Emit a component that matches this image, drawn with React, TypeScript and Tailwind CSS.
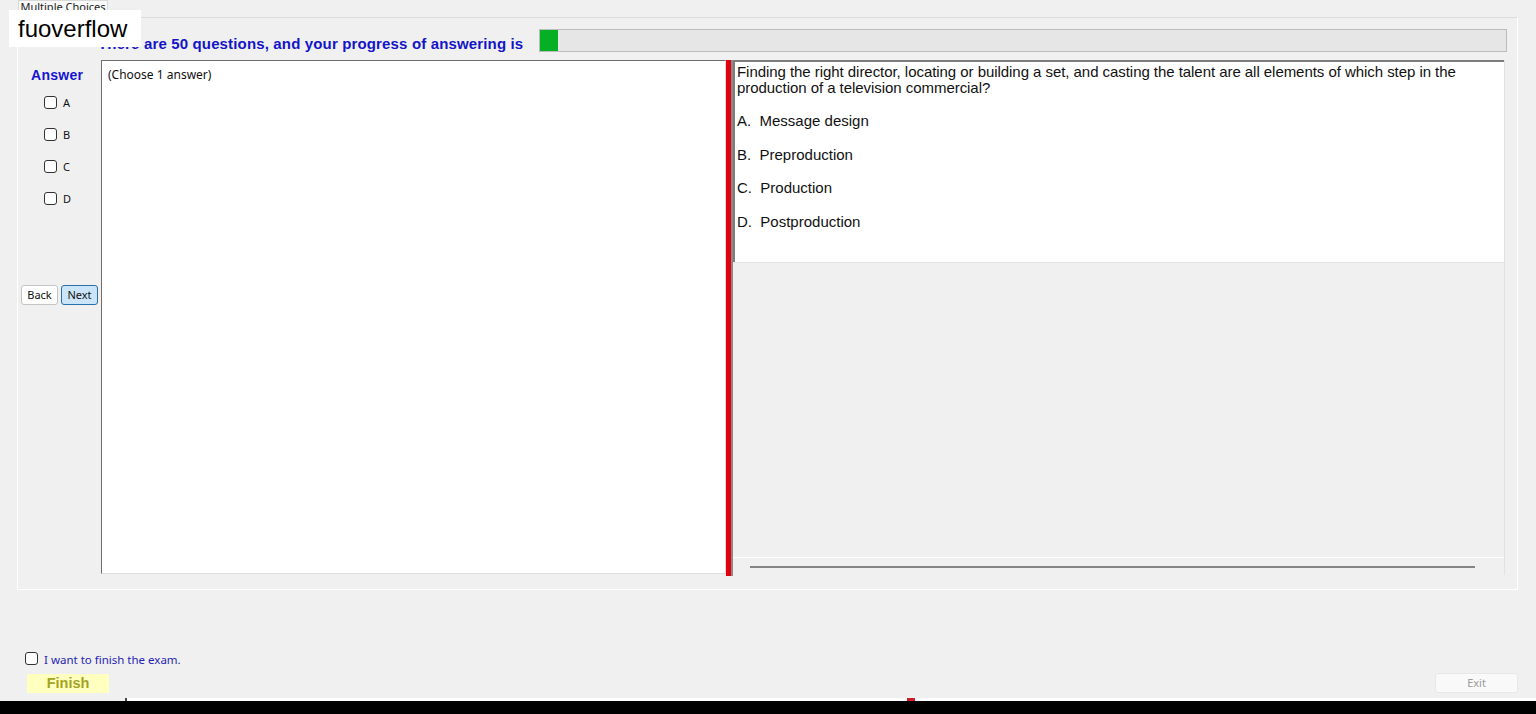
import * as React from "react";

const ui = { fontFamily: '"Noto Sans", "Open Sans", sans-serif' };
const arial = { fontFamily: '"Liberation Sans", Arial, sans-serif' };

function Box() {
  return (
    <span className="inline-block h-[13px] w-[13px] shrink-0 rounded-[3px] border border-[#333333] bg-white" />
  );
}

const options = [
  ["A.", "Message design"],
  ["B.", "Preproduction"],
  ["C.", "Production"],
  ["D.", "Postproduction"],
];

function AnswerColumn() {
  return (
    <div className="flex w-[80px] shrink-0 flex-col">
      <div
        className="pl-[10px] pt-[7px] text-[14px] font-bold leading-[16px] tracking-[0.3px] text-[#1414d2]"
        style={arial}
      >
        Answer
      </div>
      <div className="mt-[3px] flex flex-col">
        {["A", "B", "C", "D"].map((l) => (
          <div key={l} className="flex h-[32px] items-center gap-[6px] pl-[23px]">
            <Box />
            <span className="text-[11px] leading-none text-[#111]" style={ui}>
              {l}
            </span>
          </div>
        ))}
      </div>
      <div className="mt-[71px] flex gap-[3px]" style={ui}>
        <button
          type="button"
          className="flex h-[20px] w-[37px] items-center justify-center rounded-[3px] border border-[#c4c4c4] bg-white text-[11px] text-[#111]"
        >
          Back
        </button>
        <button
          type="button"
          className="flex h-[20px] w-[37px] items-center justify-center rounded-[3px] border border-[#2a6fa8] bg-[#cce4f7] text-[11px] text-[#111]"
        >
          Next
        </button>
      </div>
    </div>
  );
}

function QuestionPane() {
  return (
    <div className="flex h-[515px] w-[772px] shrink-0 flex-col border-r border-[#e2e2e2]">
      <div className="h-[202px] border-l-2 border-t-2 border-[#7d7d7d] bg-white pl-[2px] pt-[2px]" style={arial}>
        <p className="text-[15px] leading-[16px] tracking-[-0.05px] text-[#111]">
          Finding the right director, locating or building a set, and casting the talent are all
          elements of which step in the production of a television commercial?
        </p>
        {options.map(([k, v]) => (
          <p key={k} className="mt-[17px] whitespace-pre text-[15px] leading-[16.5px] text-[#111]">
            {k}  {v}
          </p>
        ))}
      </div>
      <div className="flex-1 border-t border-[#e4e4e4] bg-[#f0f0f0]" />
      <div className="flex h-[18px] items-center border-t border-white bg-[#f0f0f0] pl-[17px]">
        <div className="h-[2px] w-[725px] bg-[#858585]" />
      </div>
    </div>
  );
}

export default function App() {
  return (
    <div className="relative flex h-[714px] w-[1536px] flex-col overflow-hidden bg-[#f0f0f0]">
      <div
        className="ml-[18px] flex h-[17px] w-[90px] items-start justify-center border-x border-t border-[#d9d9d9] bg-[#f9f9f9] text-[11px] leading-[12px] text-[#222]"
        style={ui}
      >
        Multiple Choices
      </div>

      <div className="ml-[17px] h-[573px] w-[1501px] border border-white border-t-[#dcdcdc] pt-[11px]">
        <div className="flex items-center gap-[16px] pl-[80px]">
          <span
            className="self-end text-[15px] font-bold leading-[16px] tracking-[0.15px] text-[#1414c8]"
            style={arial}
          >
            There are 50 questions, and your progress of answering is
          </span>
          <div className="h-[23px] w-[968px] border border-[#bcbcbc] bg-[#e6e6e6]">
            <div className="h-full w-[18px] bg-[#06b025]" />
          </div>
        </div>

        <div className="mt-[8px] flex items-start pl-[3px]">
          <AnswerColumn />
          <div className="h-[514px] w-[625px] shrink-0 border-b border-l border-r border-t border-[#6e6e6e] border-b-[#dedede] border-r-[#dedede] bg-white pl-[6px]">
            <span className="text-[12px] leading-[23px] text-[#111]" style={ui}>
              (Choose 1 answer)
            </span>
          </div>
          <div className="h-[516px] w-[5px] shrink-0 bg-[#e3000f]" />
          <div className="h-[516px] w-[2px] shrink-0 bg-[#8a8a8a]" />
          <QuestionPane />
        </div>
      </div>

      <div className="ml-[25px] mt-[61px] flex h-[14px] items-center gap-[6px]">
        <Box />
        <span className="pt-[3px] text-[11.5px] leading-none text-[#2525b5]" style={ui}>
          I want to finish the exam.
        </span>
      </div>

      <div className="mt-[8px] flex items-end justify-between pl-[27px] pr-[18px]">
        <button
          type="button"
          className="flex h-[19px] w-[82px] items-center justify-center bg-[#ffffbf] text-[14.5px] font-bold text-[#a3a321]"
          style={arial}
        >
          Finish
        </button>
        <button
          type="button"
          className="flex h-[20px] w-[83px] items-center justify-center rounded-[3px] border border-[#e8e8e8] bg-[#f9f9f9] text-[11px] text-[#9a9a9a]"
          style={ui}
        >
          Exit
        </button>
      </div>

      <div className="mt-auto flex h-[3px] items-end">
        <div className="h-[3px] w-[125px]" />
        <div className="h-[3px] w-[2px] bg-[#444]" />
        <div className="relative h-[3px] flex-1 bg-white">
          <div className="absolute left-[780px] top-0 h-[3px] w-[8px] bg-[#d11a2a]" />
        </div>
      </div>
      <div className="h-[13px] bg-black" />

      <div
        className="absolute left-[9px] top-[10px] flex h-[37px] w-[132px] items-center bg-white pl-[9px] text-[24px] leading-none text-black"
        style={arial}
      >
        fuoverflow
      </div>
    </div>
  );
}
